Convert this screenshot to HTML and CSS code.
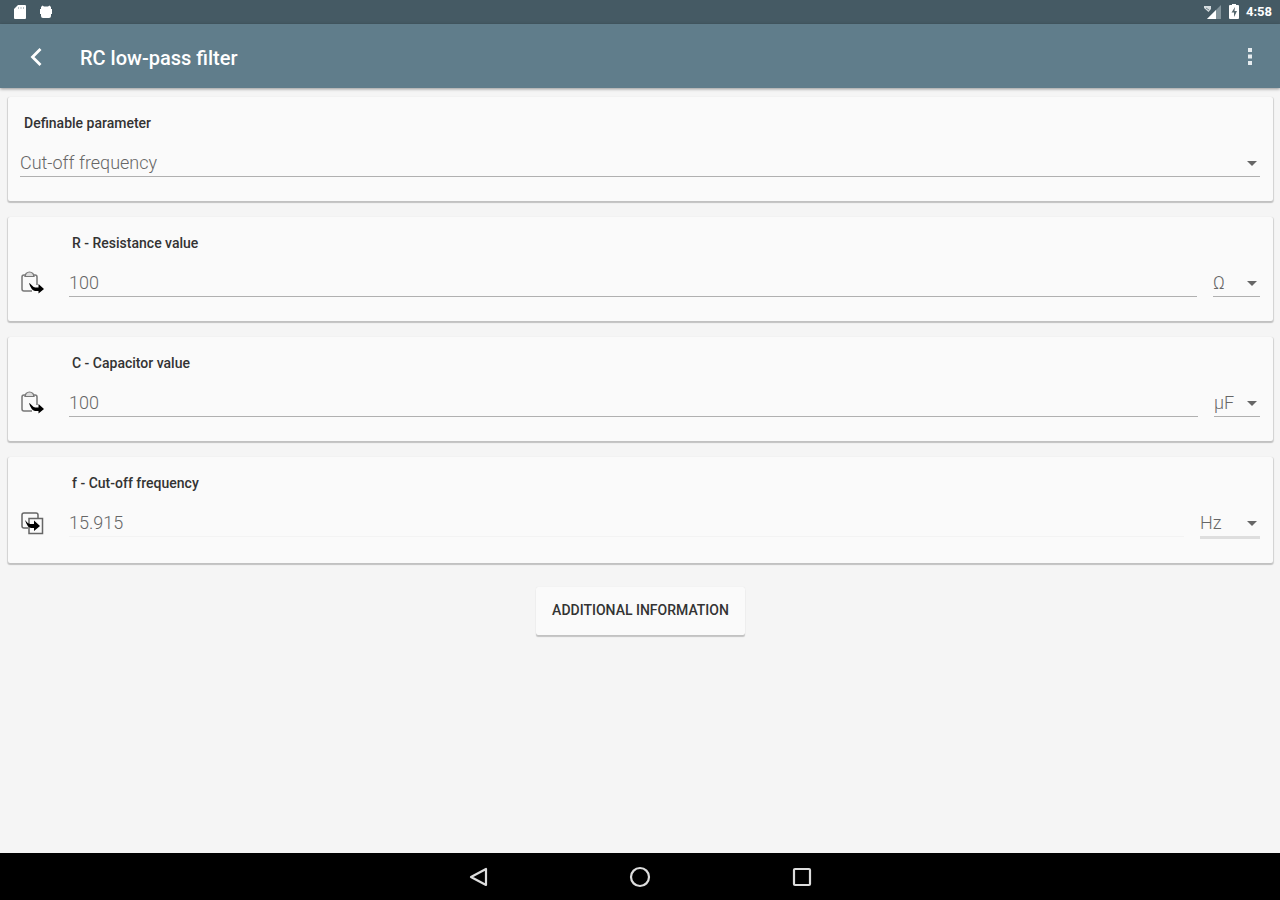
FILE: index.html
```html
<!DOCTYPE html>
<html lang="en">
<head>
<meta charset="utf-8">
<meta name="viewport" content="width=device-width, initial-scale=1">
<title>RC low-pass filter</title>
<link rel="stylesheet" href="styles.css">
</head>
<body>
<div class="status-bar">
  <div class="status-left">
    <svg width="14" height="16" viewBox="0 0 14 16" aria-hidden="true"><path d="M5 1h7q1 0 1 1v12q0 1-1 1H2q-1 0-1-1V5z" fill="#fff"/><path d="M5.500 3v2M8 3v2M10.500 3v2" stroke="#b5c0c5" stroke-width="1"/></svg>
    <svg width="14" height="16" viewBox="0 0 14 16" aria-hidden="true"><path d="M2 3 3.500 1.500 5 2.500H9l1.500-1L12 3v2h1v5h-1v2q0 2-2 2H4q-2 0-2-2v-2H1V5h1z" fill="#fff"/></svg>
  </div>
  <div class="status-right">
    <svg width="18" height="16" viewBox="0 0 18 16" aria-hidden="true"><path d="M17 1v14H3z" fill="#83949b"/><path d="M12 6v9H3z" fill="#fff"/><path d="M0 2h7v3L4.500 8 0 4z" fill="#d5dcdf"/><path d="M2 4l3 2" stroke="#73858d"/></svg>
    <svg width="10" height="16" viewBox="0 0 10 16" aria-hidden="true"><path d="M3 0h4v1h2q1 0 1 1v12q0 1-1 1H1q-1 0-1-1V2q0-1 1-1h2z" fill="#fff"/><path d="M6 3 2.500 8.500H5V13L8 7H5.500z" fill="#56686f"/></svg>
    <span class="clock">4:58</span>
  </div>
</div>
<header class="app-bar">
  <button class="icon-button" type="button" aria-label="Back">
    <svg width="24" height="24" viewBox="0 0 24 24" aria-hidden="true"><path d="M16.500 5 8.500 13l8 8" fill="none" stroke="#fff" stroke-width="2.800"/></svg>
  </button>
  <h1 class="title">RC low-pass filter</h1>
  <button class="icon-button menu-button" type="button" aria-label="More options">
    <svg width="24" height="24" viewBox="0 0 24 24" aria-hidden="true"><path d="M10 4h4v4h-4zM10 10.500h4v4h-4zM10 17h4v4h-4z" fill="#e6ecef"/></svg>
  </button>
</header>
<main class="content">
  <section class="card">
    <label class="label" for="parameter">Definable parameter</label>
    <div class="row">
      <div class="select-box wide"><select class="field" id="parameter"><option>Cut-off frequency</option><option>Resistance value</option><option>Capacitor value</option></select></div>
    </div>
  </section>
  <section class="card">
    <label class="label inset" for="resistance">R - Resistance value</label>
    <div class="row">
      <button class="clip-button" type="button" aria-label="Paste resistance"><svg width="24" height="24" viewBox="0 0 24 24" aria-hidden="true"><path d="M12 20H4q-2 0-2-2V6q0-2 2-2h11q2 0 2 2v8" fill="none" stroke="#777" stroke-width="1.500"/><path d="M5 5.500 6 2.500q3.500-3 7 0l1 3z" fill="#ddd" stroke="#777" stroke-width="1.200"/><path d="M9 12q1 0 3 2.500 2 2.500 4 2h2.500V13l5.500 5-5.500 4.500V20H15q-4-1-6-8z" fill="#000"/></svg></button>
      <input class="field value" id="resistance" type="text" value="100">
      <div class="select-box unit ohm"><select class="field" aria-label="Resistance unit"><option>Ω</option><option>kΩ</option></select></div>
    </div>
  </section>
  <section class="card">
    <label class="label inset" for="capacitor">C - Capacitor value</label>
    <div class="row">
      <button class="clip-button" type="button" aria-label="Paste capacitance"><svg width="24" height="24" viewBox="0 0 24 24" aria-hidden="true"><path d="M12 20H4q-2 0-2-2V6q0-2 2-2h11q2 0 2 2v8" fill="none" stroke="#777" stroke-width="1.500"/><path d="M5 5.500 6 2.500q3.500-3 7 0l1 3z" fill="#ddd" stroke="#777" stroke-width="1.200"/><path d="M9 12q1 0 3 2.500 2 2.500 4 2h2.500V13l5.500 5-5.500 4.500V20H15q-4-1-6-8z" fill="#000"/></svg></button>
      <input class="field value" id="capacitor" type="text" value="100">
      <div class="select-box unit"><select class="field" aria-label="Capacitance unit"><option>µF</option><option>nF</option></select></div>
    </div>
  </section>
  <section class="card">
    <label class="label inset" for="frequency">f - Cut-off frequency</label>
    <div class="row">
      <button class="clip-button" type="button" aria-label="Copy frequency"><svg width="24" height="24" viewBox="0 0 24 24" aria-hidden="true"><path d="M8 17H4q-2 0-2-2V4q0-2 2-2h12q2 0 2 2v3" fill="none" stroke="#666" stroke-width="1.500"/><path d="M9 7.500h13.500v15H9z" fill="#fafafa" stroke="#666" stroke-width="1.500"/><path d="M5 9q2 3 5 4h4V9.500l6 5.500-6 5V17h-3q-4-1-6-8z" fill="#000"/></svg></button>
      <input class="field value result" id="frequency" type="text" value="15.915" readonly>
      <div class="select-box unit large"><select class="field" aria-label="Frequency unit"><option>Hz</option><option>kHz</option></select></div>
    </div>
  </section>
  <button class="info-button" type="button">ADDITIONAL INFORMATION</button>
</main>
<nav class="nav-bar" aria-label="System navigation">
  <button class="nav-button" type="button" aria-label="Back"><svg width="22" height="22" viewBox="0 0 22 22" aria-hidden="true"><path d="M3 11 18 3v16z" fill="none" stroke="#ddd" stroke-width="2.200" stroke-linejoin="round"/></svg></button>
  <button class="nav-button" type="button" aria-label="Home"><svg width="22" height="22" viewBox="0 0 22 22" aria-hidden="true"><circle cx="11" cy="11" r="9" fill="none" stroke="#ddd" stroke-width="2.200"/></svg></button>
  <button class="nav-button" type="button" aria-label="Recent apps"><svg width="22" height="22" viewBox="0 0 22 22" aria-hidden="true"><rect x="4" y="3" width="16" height="16" rx="1" fill="none" stroke="#ddd" stroke-width="2.200"/></svg></button>
</nav>
</body>
</html>
```
FILE: styles.css
```css
* { box-sizing: border-box; }
body {
  margin: 0;
  min-height: 100vh;
  display: flex;
  flex-direction: column;
  background: #f5f5f5;
  color: #333;
  font-family: Roboto, "Liberation Sans", sans-serif;
}
button {
  border: 0;
  padding: 0;
  background: none;
  font-family: inherit;
}
svg { display: block; }
.status-bar {
  height: 24px;
  padding: 0 8px 0 13px;
  display: flex;
  align-items: center;
  justify-content: space-between;
  background: #455a64;
  color: #fff;
}
.status-left { display: flex; gap: 12px; }
.status-right { display: flex; align-items: center; gap: 7px; }
.clock { font-size: 13px; font-weight: 700; line-height: 24px; }
.app-bar {
  height: 64px;
  padding: 0 18px 0 24px;
  display: flex;
  align-items: center;
  background: #607d8b;
  color: #fff;
  box-shadow: 0 1px 3px rgba(0, 0, 0, 0.4);
}
.title {
  flex: 1;
  margin: 0 0 0 32px;
  padding-top: 3px;
  font-size: 20px;
  font-weight: 500;
  line-height: 24px;
}
.content {
  flex: 1;
  display: flex;
  flex-direction: column;
  gap: 16px;
  padding: 9px 7px 24px 8px;
}
.card {
  padding: 16px 13px 24px 12px;
  border-radius: 2px;
  background: #fafafa;
  box-shadow: 0 1px 1px 1px rgba(0, 0, 0, 0.14), 0 2px 1px rgba(0, 0, 0, 0.08);
}
.label {
  display: block;
  padding-left: 4px;
  font-size: 14px;
  font-weight: 500;
  line-height: 20px;
}
.inset { padding-left: 52px; }
.row {
  display: flex;
  align-items: flex-start;
  margin-top: 16px;
}
.field {
  display: block;
  width: 100%;
  height: 28px;
  margin: 0;
  padding: 0;
  border: 0;
  border-bottom: 1px solid #b0b0b0;
  border-radius: 0;
  background: transparent;
  color: #666;
  font: 300 18px/27px Roboto, "Liberation Sans", sans-serif;
  appearance: none;
}
.clip-button { margin: 2px 25px 0 0; }
.value { flex: 1; width: auto; min-width: 0; }
.result { border-bottom-color: #f3f3f3; }
.select-box { position: relative; }
.select-box::after {
  content: "";
  position: absolute;
  right: 3px;
  top: 12px;
  border: 5px solid transparent;
  border-top-color: #666;
  border-bottom: 0;
  pointer-events: none;
}
.wide { flex: 1; }
.unit { width: 46px; margin-left: 16px; }
.ohm { width: 47px; }
.large { width: 60px; }
.large .field { height: 30px; border-bottom: 3px solid #dedede; }
.info-button {
  align-self: center;
  height: 48px;
  margin-top: 8px;
  padding: 0 16px 2px;
  border-radius: 2px;
  background: #fafafa;
  box-shadow: 0 2px 1px rgba(0, 0, 0, 0.2), 0 0 1px rgba(0, 0, 0, 0.1);
  color: #333;
  font-size: 14px;
  font-weight: 500;
  line-height: 20px;
}
.nav-bar {
  height: 47px;
  display: flex;
  align-items: center;
  justify-content: center;
  gap: 139px;
  background: #000;
}
```
